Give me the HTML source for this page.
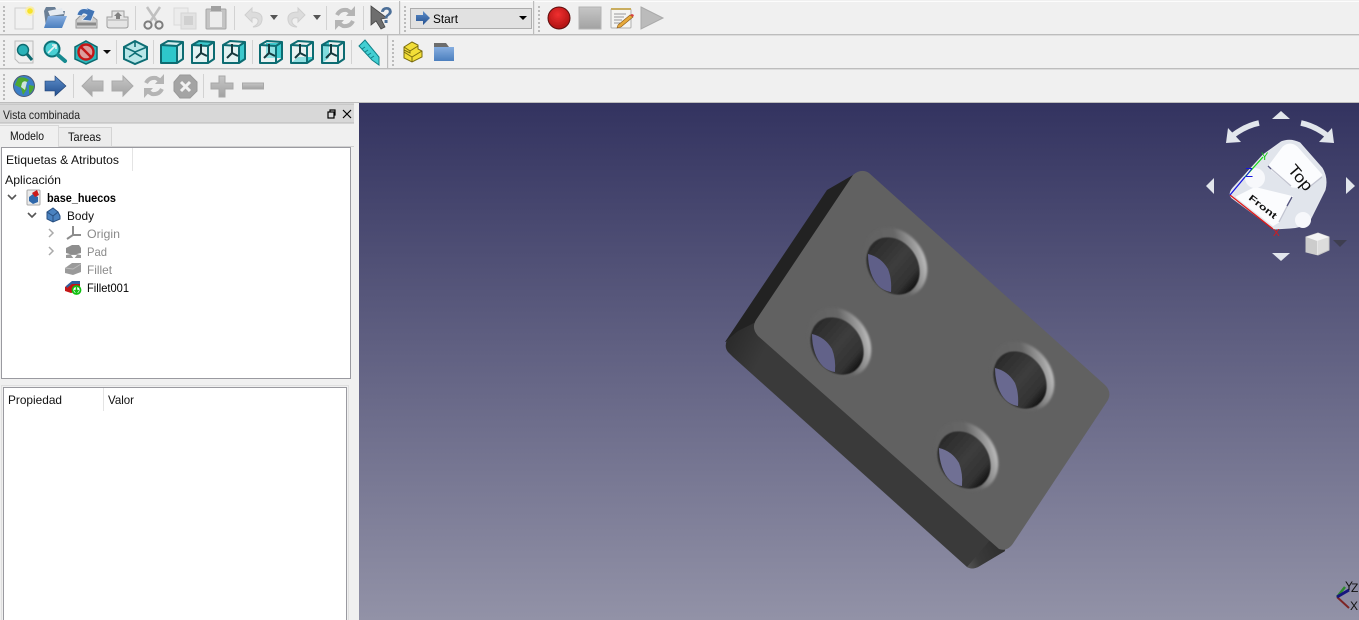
<!DOCTYPE html>
<html><head><meta charset="utf-8"><style>
html,body{margin:0;padding:0;width:1359px;height:620px;overflow:hidden;background:#f0f0f0}
svg{display:block;font-family:"Liberation Sans",sans-serif;font-size:12px}
</style></head><body>
<svg width="1359" height="620" viewBox="0 0 1359 620" xmlns="http://www.w3.org/2000/svg">
<defs>
<linearGradient id="bg" x1="0" y1="103" x2="0" y2="620" gradientUnits="userSpaceOnUse"><stop offset="0" stop-color="#333360"/><stop offset="1" stop-color="#9292a7"/></linearGradient>
<linearGradient id="side2" x1="725" y1="342" x2="760" y2="360" gradientUnits="userSpaceOnUse"><stop offset="0" stop-color="#2a2a2a"/><stop offset="1" stop-color="#3a3a3a"/></linearGradient>
<linearGradient id="side3" x1="965" y1="568" x2="1005" y2="550" gradientUnits="userSpaceOnUse"><stop offset="0" stop-color="#5a5a5a"/><stop offset=".35" stop-color="#3a3a3a"/><stop offset="1" stop-color="#2e2e2e"/></linearGradient>
<linearGradient id="ring" x1="0" y1=".25" x2="1" y2=".75"><stop offset="0" stop-color="#616161"/><stop offset=".58" stop-color="#666"/><stop offset=".85" stop-color="#a0a0a0"/><stop offset="1" stop-color="#d0d0d0"/></linearGradient>
<linearGradient id="inner" x1=".4" y1="0" x2=".6" y2="1"><stop offset="0" stop-color="#2a2a2a"/><stop offset=".5" stop-color="#3d3d3d"/><stop offset=".82" stop-color="#333"/><stop offset="1" stop-color="#111"/></linearGradient>
<filter id="b1" x="-20%" y="-20%" width="140%" height="140%"><feGaussianBlur stdDeviation="1"/></filter>
<filter id="b2" x="-20%" y="-20%" width="140%" height="140%"><feGaussianBlur stdDeviation=".6"/></filter>
<filter id="s" x="-2%" y="-5%" width="104%" height="110%"><feGaussianBlur stdDeviation=".35"/></filter>
<linearGradient id="cy" x1="0" y1="0" x2="0" y2="1"><stop offset="0" stop-color="#4fd8dc"/><stop offset="1" stop-color="#22b4b8"/></linearGradient>
<linearGradient id="gr" x1="0" y1="0" x2="0" y2="1"><stop offset="0" stop-color="#c6c6c6"/><stop offset="1" stop-color="#a2a2a2"/></linearGradient>
<linearGradient id="bl" x1="0" y1="0" x2="0" y2="1"><stop offset="0" stop-color="#86aee0"/><stop offset="1" stop-color="#4c7fbe"/></linearGradient>
<linearGradient id="ar" x1="0" y1="0" x2="0" y2="1"><stop offset="0" stop-color="#5d8ecb"/><stop offset="1" stop-color="#234f8e"/></linearGradient>
<radialGradient id="rd" cx=".45" cy=".35" r=".7"><stop offset="0" stop-color="#f03030"/><stop offset="1" stop-color="#a80f0f"/></radialGradient>
<g id="hole">
<ellipse cx="0" cy="-1" rx="29" ry="37" transform="rotate(-35)" fill="url(#ring)" filter="url(#b1)"/>
<ellipse cx="-3" cy="3" rx="24.500" ry="30.500" transform="translate(-3 3) rotate(-35) translate(3 -3)" fill="url(#inner)" filter="url(#b2)"/>
<path d="M-28,-9 Q-15,-6 -8,6 Q-4,16 -5,29 Q-19,27 -25,10 Q-28,1 -28,-9Z" fill="currentColor"/>
</g>
<g id="cube"><path d="M-11,-7 L-4,-11 L11,-10 L11,7 L5,11 L-11,11Z" fill="none" stroke="#0d6c72" stroke-width="2" stroke-linejoin="round"/><path d="M-11,-7 L5,-6 L11,-10 M5,-6 V11" fill="none" stroke="#0d6c72" stroke-width="2"/></g>
<g id="rays"><path d="M-2,-8 V1 M-2,1 L-7,6 M-2,1 L4,4" stroke="#12383c" stroke-width="2" fill="none"/></g>
<g id="tri"><path d="M-4,-2 H4 L0,3Z" fill="#555"/></g>
<g id="grip"><path d="M0,0 h2 M0,4 h2 M0,8 h2 M0,12 h2 M0,16 h2 M0,20 h2 M0,24 h2" stroke="#bbb" stroke-width="2"/></g>
</defs>

<rect width="1359" height="620" fill="#f0f0f0"/>
<rect y="1" width="1359" height="1" fill="#fcfcfc"/>
<rect y="34" width="1359" height="1.4" fill="#bdbdbd"/>
<rect y="68" width="1359" height="1.4" fill="#bdbdbd"/>
<rect y="102" width="1359" height="1" fill="#bdbdbd"/>
<rect x="399" y="1" width="1.2" height="33" fill="#bdbdbd"/>
<rect x="533" y="1" width="1.2" height="33" fill="#bdbdbd"/>
<rect x="387" y="35" width="1.2" height="33" fill="#bdbdbd"/>
<use href="#grip" x="3" y="7"/><use href="#grip" x="3" y="41"/><use href="#grip" x="3" y="75"/>
<use href="#grip" x="404" y="7"/><use href="#grip" x="538" y="7"/><use href="#grip" x="392" y="41"/>
<g fill="#d2d2d2">
<rect x="135" y="6" width="1" height="24"/><rect x="234" y="6" width="1" height="24"/><rect x="326" y="6" width="1" height="24"/><rect x="363" y="6" width="1" height="24"/>
<rect x="116" y="40" width="1" height="24"/><rect x="153" y="40" width="1" height="24"/><rect x="252" y="40" width="1" height="24"/><rect x="351" y="40" width="1" height="24"/>
<rect x="73" y="74" width="1" height="24"/><rect x="203" y="74" width="1" height="24"/>
</g>

<!-- Toolbar 1 -->
<g filter="url(#s)">
<rect x="15" y="8" width="18" height="21" fill="#f1f1f1" stroke="#d0d0d0"/>
<circle cx="30" cy="11" r="5" fill="#ffef9a" opacity=".7"/><circle cx="30" cy="11" r="2.800" fill="#f6e32a"/>
<path d="M44,11 L46,7 H55 L57,11 H65 L62,27 H46Z" fill="#6b7f96"/><path d="M48,11 L62,8 L64,14 L50,16Z" fill="#e6ebf1"/><path d="M48,16 H67 L62,28 H44Z" fill="url(#bl)"/>
<path d="M76,20 L80,16 H92 L97,20 V28 H76Z" fill="#cfcfcf" stroke="#999"/><path d="M77,24 H96" stroke="#8a8a8a" stroke-width="3"/>
<path d="M77,15 Q79,7 87,9 L85,7 L95,11 L91,21 L82,20 L87,15 Q83,12 82,16Z" fill="#3f73b4" stroke="#e8eef6" stroke-width=".8"/>
<path d="M112,11 H124 V17 H128 V26 Q128,28 125,28 H110 Q107,28 107,26 V17 H112Z" fill="#e4e4e4" stroke="#9e9e9e"/><path d="M108,20 H127" stroke="#aaa"/><path d="M118,12 L122,16 H120 V19 H116 V16 H114Z" fill="#808080"/>
<g fill="none"><path d="M147,7 L157,22 M160,7 L150,22" stroke="#c0c0c0" stroke-width="2.500"/><circle cx="148" cy="25" r="3.600" stroke="#7d7d7d" stroke-width="2"/><circle cx="159" cy="25" r="3.600" stroke="#7d7d7d" stroke-width="2"/></g>
<rect x="174" y="8" width="14" height="17" fill="#ececec" stroke="#dadada"/><rect x="181" y="13" width="15" height="16" fill="#e2e2e2" stroke="#d4d4d4"/><rect x="184" y="16" width="9" height="9" fill="#d0d0d0"/>
<rect x="206" y="9" width="20" height="20" rx="1" fill="#c4c4c4" stroke="#a6a6a6"/><rect x="210" y="12" width="12" height="15" fill="#ececec"/><rect x="211" y="6" width="10" height="5" fill="#a0a0a0"/>
<path d="M245,15 L252,8 V12 Q263,12 262,20 Q261,27 253,27 Q259,24 258,20 Q257,17 252,18 V22Z" fill="#dcdcdc" stroke="#cfcfcf"/>
<use href="#tri" x="274" y="17"/>
<path d="M305,15 L298,8 V12 Q287,12 288,20 Q289,27 297,27 Q291,24 292,20 Q293,17 298,18 V22Z" fill="#dcdcdc" stroke="#cfcfcf"/>
<use href="#tri" x="317" y="17"/>
<g fill="none" stroke="#b4b4b4" stroke-width="4"><path d="M337,15 Q340,9 347,10 L352,13"/><path d="M353,21 Q350,27 343,26 L338,23"/></g><path d="M355,6 V16 H346Z M335,30 V20 H344Z" fill="#b4b4b4"/>
<path d="M371,6 L371,25 L376,21 L381,29 L385,27 L381,19 L387,18Z" fill="#6e6e6e" stroke="#444" stroke-width=".8"/>
</g>
<text x="380" y="23" font-size="23" font-weight="bold" fill="#4c6f98" textLength="13" lengthAdjust="spacingAndGlyphs">?</text>
<rect x="410.500" y="8.500" width="121" height="20" fill="#e1e1e1" stroke="#adadad"/>
<path d="M416,15 H423 V11 L430,18 L423,25 V21 H416Z" fill="url(#ar)"/>
<text x="433" y="23" fill="#000" textLength="25" lengthAdjust="spacingAndGlyphs">Start</text>
<path d="M519,16 H527 L523,20Z" fill="#000"/>
<g filter="url(#s)">
<circle cx="559" cy="18" r="11" fill="url(#rd)" stroke="#5c0c0c"/>
<rect x="579" y="7" width="22" height="22" fill="url(#gr)" stroke="#b4b4b4"/>
<rect x="611" y="9" width="20" height="19" rx="1" fill="#f4f4f2" stroke="#b0b0b0"/><path d="M611,8 h20 v2 h-20z" fill="#c9ad5e"/><path d="M614,14 h12 M614,17 h10 M614,20 h8 M614,23 h6" stroke="#999"/><path d="M618,25 L630,15 L633,17 L621,27 L617,28Z" fill="#e6a93a" stroke="#8c5a18" stroke-width=".6"/><path d="M630,15 L633,17 L634,15 L632,14Z" fill="#d84040"/>
<path d="M641,7 L663,18 L641,29Z" fill="#bbb" stroke="#aaa"/>
</g>

<!-- Toolbar 2 -->
<g filter="url(#s)">
<path d="M15,41 H33 V63 H19 L15,59Z" fill="#eeeeee" stroke="#bbb"/><circle cx="23" cy="50" r="5.500" fill="#2ab2b8" stroke="#0e6b70" stroke-width="1.400"/><path d="M27,54 L32,60" stroke="#0e6b70" stroke-width="3"/>
<circle cx="52" cy="49" r="7.500" fill="#48cfd3" stroke="#107278" stroke-width="2"/><path d="M48,53 L55,46 M52,45 H56 V49" stroke="#e8f4f4" stroke-width="1.600" fill="none"/><path d="M58,55 L65,61" stroke="#148a90" stroke-width="4" stroke-linecap="round"/>
<path d="M86,41 L97,47 V59 L86,64 L75,59 V47Z" fill="#2cb8bc" stroke="#0e6b70" stroke-width="1.500"/><circle cx="86" cy="52" r="7.500" fill="#dc9d9d" stroke="#c41212" stroke-width="2.400"/><path d="M81,47 L91,57" stroke="#c41212" stroke-width="2.400"/>
<path d="M103,50 H111 L107,54Z" fill="#111"/>
<path d="M135,41 L147,47 V59 L135,64 L124,59 V47Z" fill="#b8e6e8" stroke="#0f6e74" stroke-width="2"/><path d="M124,47 L135,52 L147,47 M135,42 V47 M135,53 L129,57 M135,53 L142,57" stroke="#0f6e74" stroke-width="1.600" fill="none"/>
<g transform="translate(172 52)"><path d="M-11,-7 L5,-6 V11 H-11Z" fill="#2ec7cb"/><path d="M-11,-7 L-4,-11 L11,-10 L5,-6Z M5,-6 L11,-10 V7 L5,11Z" fill="#d5eeee"/><use href="#cube"/></g>
<g transform="translate(203 52)"><path d="M-11,-7 L-4,-11 L11,-10 L5,-6Z" fill="#3cc8cc"/><path d="M-11,-7 L5,-6 V11 H-11Z" fill="#e2f2f2"/><use href="#cube"/><use href="#rays"/></g>
<g transform="translate(234 52)"><path d="M5,-6 L11,-10 V7 L5,11Z" fill="#3cc8cc"/><path d="M-11,-7 L5,-6 V11 H-11Z" fill="#e2f2f2"/><use href="#cube"/><use href="#rays"/></g>
<g transform="translate(271 52)"><path d="M-5,-9 H10 V6 H-5Z" fill="#40cdd1"/><path d="M-11,-7 L5,-6 V11 H-11Z" fill="#dff3f3" opacity=".5"/><use href="#cube"/><use href="#rays"/></g>
<g transform="translate(302 52)"><path d="M-11,11 L-4,5 H11 L5,11Z" fill="#40cdd1"/><path d="M-11,-7 L5,-6 V11 H-11Z" fill="#e2f2f2" opacity=".5"/><use href="#cube"/><use href="#rays"/></g>
<g transform="translate(333 52)"><path d="M-11,-7 L-4,-11 V6 L-11,11Z" fill="#40cdd1"/><path d="M-11,-7 L5,-6 V11 H-11Z" fill="#e2f2f2" opacity=".4"/><use href="#cube"/><use href="#rays"/></g>
<path d="M359,46 L365,40 L379,57 L379,65 L372,60Z" fill="#43cfd3" stroke="#118087"/><path d="M362,49 l3,-2 M365,52 l3,-2 M368,55 l3,-2 M371,58 l3,-2" stroke="#118087"/>
<path d="M404,47 L412,42 L418,45 V49 L422,51 V57 L412,62 L404,58Z" fill="#f2de38" stroke="#7a6c10"/><path d="M404,47 L410,51 V53 L404,50 M410,51 L418,46 M404,52 L412,57 V62 M412,57 L422,51" stroke="#7a6c10" fill="none"/>
<path d="M434,60 V43 H446 L449,47 V60Z" fill="#6d6d6d"/><rect x="434" y="47" width="20" height="14" fill="url(#bl)"/>
</g>

<!-- Toolbar 3 -->
<g filter="url(#s)">
<circle cx="24" cy="86" r="10.500" fill="#3b7fc7" stroke="#4a5a78"/><path d="M18,78 Q24,76 29,80 L25,84 L27,89 L23,95 L21,88 L15,85Z M29,85 L34,86 Q33,92 29,94Z" fill="#4da832"/><path d="M22,83 Q24,80 27,82 L25,90 L21,87Z" fill="#e6eef8" opacity=".85"/>
<path d="M45,81 H55 V76 L66,86 L55,96 V91 H45Z" fill="url(#ar)" stroke="#1c3e70" stroke-width=".6"/>
<path d="M82,86 L92,76 V81 H103 V91 H92 V96Z" fill="url(#gr)" stroke="#aaa"/>
<path d="M133,86 L123,76 V81 H112 V91 H123 V96Z" fill="url(#gr)" stroke="#aaa"/>
<g fill="none" stroke="#b4b4b4" stroke-width="4"><path d="M146,83 Q149,77 156,78 L161,81"/><path d="M162,89 Q159,95 152,94 L147,91"/></g><path d="M164,74 V84 H155Z M144,98 V88 H153Z" fill="#b4b4b4"/>
<path d="M180,75 H190 L197,82 V91 L190,98 H180 L174,91 V82Z" fill="#a4a4a4" stroke="#999"/><path d="M181,82 L190,91 M190,82 L181,91" stroke="#f2f2f2" stroke-width="3"/>
<path d="M219,76 H225 V83 H233 V89 H225 V97 H219 V89 H211 V83 H219Z" fill="url(#gr)" stroke="#a8a8a8"/>
<rect x="242.500" y="83" width="21" height="6" fill="url(#gr)" stroke="#a8a8a8"/>
</g>

<!-- Left panel -->
<rect x="0" y="103" width="359" height="517" fill="#f0f0f0"/>
<rect x="0" y="104" width="354" height="19" fill="#d8d8d8"/>
<path d="M0,104 H354 M0,123 H354" stroke="#b8b8b8" fill="none"/>
<text x="3" y="119" fill="#222" textLength="77" lengthAdjust="spacingAndGlyphs">Vista combinada</text>
<g fill="none" stroke="#000" stroke-width="1.200"><rect x="328" y="112" width="6" height="6" fill="#d8d8d8"/><path d="M330,112 V110 H335 V115 H334"/><path d="M343,110 L351,118 M351,110 L343,118"/></g>
<path d="M0,146.500 H354" stroke="#d0d0d0"/>
<rect x="58.500" y="127.500" width="53" height="19" fill="#ececec" stroke="#d4d4d4"/>
<rect x="0" y="126" width="58" height="21" fill="#f0f0f0"/><path d="M0,125.500 H58.500 V147" stroke="#d8d8d8" fill="none"/>
<text x="10" y="140" fill="#111" textLength="34" lengthAdjust="spacingAndGlyphs">Modelo</text>
<text x="68" y="141" fill="#111" textLength="33" lengthAdjust="spacingAndGlyphs">Tareas</text>

<rect x="1.500" y="147.500" width="349" height="231" fill="#fff" stroke="#9a9aa0"/>
<path d="M132.500,148 V171" stroke="#e4e4e4"/>
<text x="6" y="164" fill="#111" textLength="113" lengthAdjust="spacingAndGlyphs">Etiquetas &amp; Atributos</text>
<text x="5" y="184" fill="#111" textLength="56" lengthAdjust="spacingAndGlyphs">Aplicación</text>
<path d="M8,195 L12,199 L16,195" fill="none" stroke="#555" stroke-width="1.600"/>
<rect x="27" y="190" width="13" height="15" rx="1" fill="#eaeaea" stroke="#aaa"/><path d="M29,197 L33,194 L38,197 V202 L33,204 L29,201Z" fill="#2f68ab"/><path d="M32,193 L37,190 L39,195 L35,197Z" fill="#cc1a1a"/>
<text x="47" y="202" font-weight="bold" fill="#000" textLength="69" lengthAdjust="spacingAndGlyphs">base_huecos</text>
<path d="M28,213 L32,217 L36,213" fill="none" stroke="#555" stroke-width="1.600"/>
<path d="M47,212 L53,208 L58,212 L60,216 V219 L53,222 L47,219Z" fill="#4a82c0" stroke="#284f80"/><path d="M47,212 L53,216 V222 M53,216 L58,212" stroke="#284f80" fill="none"/>
<text x="67" y="220" fill="#111" textLength="27" lengthAdjust="spacingAndGlyphs">Body</text>
<path d="M49,229 L53,233 L49,237 M49,247 L53,251 L49,255" fill="none" stroke="#aaa" stroke-width="1.500"/>
<path d="M73,226 V235 L67,239 M73,235 H81" stroke="#8c8c8c" stroke-width="2" fill="none"/>
<text x="87" y="238" fill="#8a8a8a" textLength="33" lengthAdjust="spacingAndGlyphs">Origin</text>
<path d="M66,248 L72,245 H79 L81,248 V253 L73,255 L66,253Z" fill="#8e8e8e"/><path d="M66,255 Q73,253 81,255 V258 H66Z" fill="#999"/><path d="M71,255 H77 L74,259Z" fill="#fff"/>
<text x="87" y="256" fill="#8a8a8a" textLength="20" lengthAdjust="spacingAndGlyphs">Pad</text>
<path d="M65,268 L72,263 H81 V272 L73,275 L65,273Z" fill="#9a9a9a"/><path d="M65,268 L73,269 L81,264" stroke="#bbb" fill="none"/>
<text x="87" y="274" fill="#8a8a8a" textLength="25" lengthAdjust="spacingAndGlyphs">Fillet</text>
<path d="M65,287 L71,282 H80 V291 L71,293 L65,291Z" fill="#c41616"/><path d="M66,286 L72,281 H80 V284 L72,284 L67,288Z" fill="#2f5f9e"/>
<circle cx="76.500" cy="290" r="4" fill="#fff" stroke="#10c010" stroke-width="1.800"/><path d="M76.500,287 V291 M74.500,290 L76.500,292.500 L78.500,290" stroke="#10c010" stroke-width="1.500" fill="none"/>
<text x="87" y="292" fill="#000" textLength="42" lengthAdjust="spacingAndGlyphs">Fillet001</text>

<rect x="1.500" y="385.500" width="347" height="240" fill="none" stroke="#e0e0e0"/>
<rect x="3.500" y="387.500" width="343" height="240" fill="#fff" stroke="#9a9aa0"/>
<path d="M103.500,388 V411" stroke="#e4e4e4"/>
<text x="8" y="404" fill="#111" textLength="54" lengthAdjust="spacingAndGlyphs">Propiedad</text>
<text x="108" y="404" fill="#111" textLength="26" lengthAdjust="spacingAndGlyphs">Valor</text>

<!-- 3D view -->
<rect x="359" y="103" width="1000" height="517" fill="url(#bg)"/>
<path d="M853,175 L827,190 L725,342 L754,330 L858,178Z" fill="#222"/>
<path d="M754,323 Q748,326 738,331 L727,340 Q724,347 728,352 L733,357 L967,567 Q972,570 978,567 L1005,551 L1010,500 Z" fill="url(#side2)"/>
<path d="M967,567 Q972,570 978,567 L1005,551 L990,540 Z" fill="url(#side3)"/>
<path d="M853,175 Q861,168 869,173 L1105,385 Q1112,392 1108,400 L1014,542 Q1008,552 999,549 L758,336 Q751,328 756,320Z" fill="#616161"/>
<use href="#hole" x="896" y="263" color="#5f5f88"/>
<use href="#hole" x="840" y="343" color="#626289"/>
<use href="#hole" x="1023" y="377" color="#696990"/>
<use href="#hole" x="967" y="457" color="#707094"/>

<!-- Navigation cube -->
<g fill="#e2e6ec">
<path d="M1281,111 L1290,119 H1272Z"/><path d="M1281,261 L1290,253 H1272Z"/>
<path d="M1214,178 V194 L1206,186Z"/><path d="M1346,177 V194 L1355,186Z"/>
<path d="M1226,143 L1228,128 L1241,142Z"/><path d="M1334,143 L1332,128 L1319,142Z"/>
</g>
<path d="M1259,123 Q1245,126 1232,136 M1301,123 Q1315,126 1328,136" stroke="#e2e6ec" stroke-width="5.500" fill="none"/>
<path d="M1263,155 L1281,142 Q1290,138 1300,143 L1322,168 Q1328,178 1325,190 L1309,222 Q1300,228 1290,228 L1274,229 L1232,198 Q1228,194 1233,188Z" fill="#e1e5ec" stroke="#e6e9ef"/>
<path d="M1268,167 L1283,147 Q1290,141 1297,147 L1322,175 L1307,188 L1292,187Z" fill="#fbfcfe" stroke="#fbfcfe" stroke-linejoin="round"/>
<path d="M1237,197 L1273,225 L1278,222 L1292,197 L1255,188Z" fill="#fbfcfe" stroke="#fbfcfe" stroke-width="2" stroke-linejoin="round"/>
<circle cx="1255" cy="178" r="10" fill="#f7f8fb"/>
<circle cx="1303" cy="220" r="8" fill="#f7f8fb"/>
<path d="M1268,166 L1291,186 M1308,188 L1322,177 M1292,197 L1279,222" stroke="#c2c4d0" stroke-width="1.300" fill="none"/>
<path d="M1268,166 L1271,169 M1292,197 L1287,206" stroke="#55557f" stroke-width="1.300" fill="none"/>
<text transform="translate(1287 170) rotate(50)" font-size="16" fill="#111" textLength="29" lengthAdjust="spacingAndGlyphs">Top</text>
<text transform="translate(1248 199) rotate(38)" font-size="9" font-weight="bold" fill="#111" textLength="33" lengthAdjust="spacingAndGlyphs">Front</text>
<path d="M1230,195 L1273,229" stroke="#e01818" stroke-width="1.300"/>
<path d="M1230,195 L1245,177" stroke="#1616e0" stroke-width="1.300"/>
<path d="M1245,177 L1263,157" stroke="#18d818" stroke-width="1.300"/>
<text x="1245" y="177" font-size="13" fill="#1616e0">Z</text>
<text x="1261" y="160" font-size="11" fill="#18c818">Y</text>
<text x="1273" y="236" font-size="10" fill="#e01818">X</text>
<path d="M1306,237 L1318,233 L1329,237 V250 L1318,255 L1306,252Z" fill="#dcdcdc" stroke="#c8c8c8"/><path d="M1306,237 L1317,241 L1329,237 L1318,233Z" fill="#f4f4f4"/><path d="M1317,241 V255" stroke="#f0f0f0"/><path d="M1306,237 L1317,241 V255 L1306,252Z" fill="#cccccc"/>
<path d="M1333,240 H1347 L1340,247Z" fill="#3e3e50"/>

<!-- Triad -->
<path d="M1337,597 L1349,608" stroke="#7d2525" stroke-width="2"/>
<path d="M1337,597 L1345,587" stroke="#2d8a2d" stroke-width="2.500"/>
<path d="M1337,597 L1349,590" stroke="#16167e" stroke-width="3"/>
<text x="1345" y="590" font-size="12" fill="#111">Y</text>
<text x="1351" y="592" font-size="12" fill="#111">Z</text>
<text x="1350" y="610" font-size="12" fill="#111">X</text>
</svg>
</body></html>
